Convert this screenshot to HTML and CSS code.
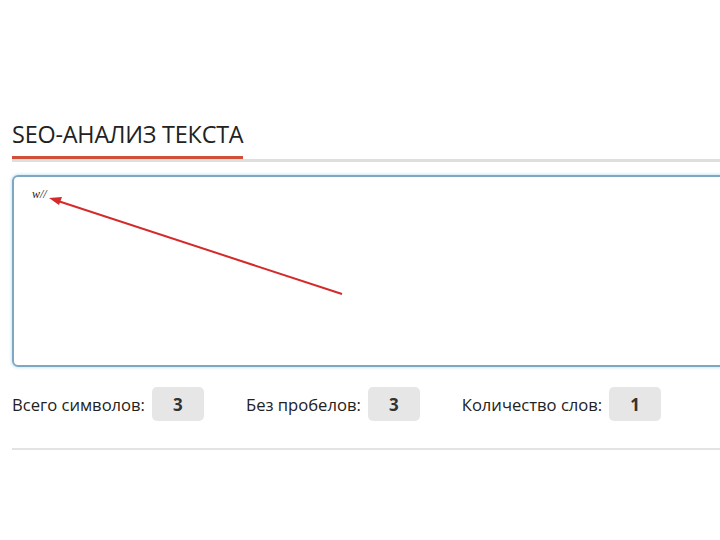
FILE: index.html
```html
<!DOCTYPE html>
<html lang="ru">
<head>
<meta charset="utf-8">
<link rel="stylesheet" href="styles.css">
</head>
<body>
<div class="page">
  <div class="heading">
    <h1 class="title">SEO-АНАЛИЗ ТЕКСТА</h1>
  </div>
  <div class="editor">
    <div class="field">
      <span class="typed">w//</span>
    </div>
    <svg class="arrow" width="720" height="540" viewBox="0 0 720 540">
      <line x1="342" y1="294" x2="58" y2="201" stroke="#d42a2a" stroke-width="2"/>
      <polygon points="49,198 62,197 59,205" fill="#d42a2a"/>
    </svg>
  </div>
  <div class="stats">
    <span class="label">Всего символов:</span><span class="badge">3</span>
    <span class="label gap">Без пробелов:</span><span class="badge">3</span>
    <span class="label gap">Количество слов:</span><span class="badge">1</span>
  </div>
  <div class="rule"></div>
</div>
</body>
</html>
```
FILE: styles.css
```css
html, body {
  margin: 0;
  padding: 0;
  background: #ffffff;
  overflow: hidden;
}
.page {
  width: 720px;
  height: 540px;
  padding: 118px 0 0 12px;
  box-sizing: border-box;
  font-family: "Open Sans", "DejaVu Sans", sans-serif;
  color: #222;
  position: relative;
}
.heading {
  border-bottom: 3px solid #dedede;
  height: 41px;
}
.title {
  margin: 0;
  display: inline-block;
  font-weight: 400;
  font-size: 23.4px;
  line-height: 32px;
  padding-bottom: 6px;
  border-bottom: 3px solid #cf4f38;
  margin-bottom: -3px;
  color: #222;
  letter-spacing: -0.2px;
}
.editor {
  margin-top: 13px;
}
.field {
  margin-right: -20px;
  border: 2px solid #7fa7c2;
  border-radius: 6px;
  box-shadow: 0 0 3px 1px #cde9f8;
  padding: 12px 18px;
  box-sizing: content-box;
  height: 164px;
}
.typed {
  font-family: "Liberation Serif", serif;
  font-size: 12px;
  font-style: italic;
  color: #222;
  line-height: 10px;
  display: block;
  margin-top: 0;
}
.arrow {
  position: absolute;
  left: 0;
  top: 0;
  pointer-events: none;
}
.stats {
  margin-top: 20px;
  display: flex;
  align-items: center;
  font-size: 16.6px;
  color: #222;
}
.label {
  margin-right: 7px;
}
.label.gap {
  margin-left: 42px;
}
.badge {
  width: 52px;
  height: 34px;
  border-radius: 5px;
  background: #e6e6e6;
  font-weight: 700;
  font-size: 17px;
  display: flex;
  align-items: center;
  justify-content: center;
  color: #333;
}
.rule {
  margin-top: 27px;
  border-top: 2px solid #e3e3e3;
}
```
